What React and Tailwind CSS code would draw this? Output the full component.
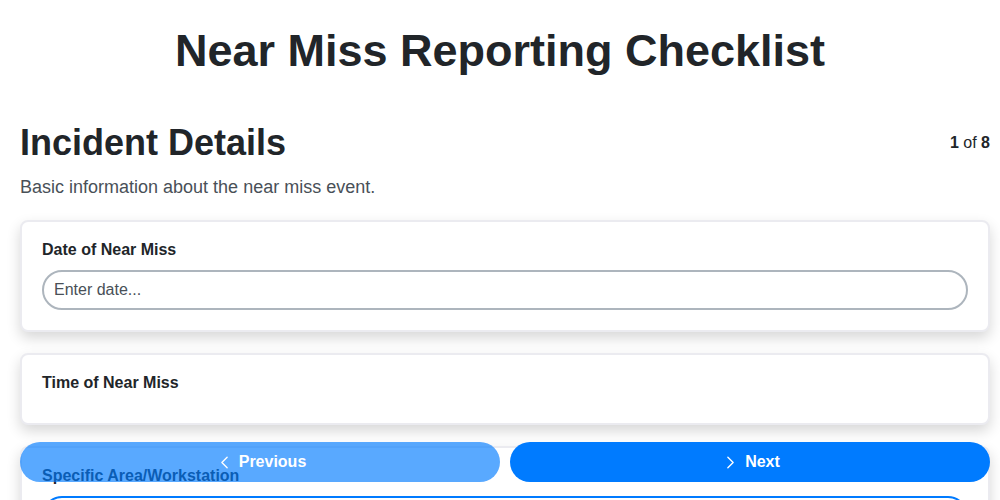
import { ChevronLeft, ChevronRight } from 'lucide-react';

const fields = [
  { id: 'date', label: 'Date of Near Miss', placeholder: 'Enter date...', input: true },
  { id: 'time', label: 'Time of Near Miss', input: false },
  { id: 'area', label: 'Specific Area/Workstation', placeholder: 'Enter area...', input: true, focused: true },
  { id: 'dept', label: 'Department', placeholder: 'Enter department...', input: true },
];

const FieldCard = ({ field }) => {
  const inputClass = field.focused
    ? 'w-full h-10 px-[10px] rounded-full border-2 border-[#007bff] text-base text-[#212529] placeholder-[#495057] outline-none bg-white'
    : 'w-full h-10 px-[10px] rounded-full border-2 border-[#adb5bd] text-base text-[#212529] placeholder-[#495057] outline-none bg-white';

  return (
    <div className="bg-white rounded-lg border-2 border-[#ebebf0] shadow-[0_6px_14px_rgba(0,0,0,0.16)] px-[20px] pt-[19px] pb-[20px]">
      <label htmlFor={field.id} className="block text-base font-bold leading-[18px] text-[#212529] mb-[11px]">
        {field.label}
      </label>
      {field.input && (
        <input id={field.id} type="text" placeholder={field.placeholder} className={inputClass} />
      )}
    </div>
  );
};

export default function App() {
  return (
    <div
      className="relative h-[500px] overflow-hidden bg-white text-[#212529]"
      style={{ fontFamily: '"Liberation Sans", Arial, sans-serif' }}
    >
      <h1 className="text-[45px] font-bold leading-[55px] text-center pt-[23px]">
        Near Miss Reporting Checklist
      </h1>

      <div className="pl-5 pr-[10px]">
        <div className="flex items-center justify-between mt-[43px]">
          <h2 className="text-4xl font-bold leading-[43px]">Incident Details</h2>
          <div className="text-base">
            <span className="font-bold">1</span> of <span className="font-bold">8</span>
          </div>
        </div>
        <p className="text-lg leading-[27px] text-[#495057] mt-[10px]">
          Basic information about the near miss event.
        </p>

        <div className="flex flex-col gap-[21px] mt-[19px]">
          {fields.map((f) => (
            <FieldCard key={f.id} field={f} />
          ))}
        </div>
      </div>

      <div className="fixed left-5 right-[10px] bottom-[18px] flex gap-[10px]">
        <button
          disabled
          className="flex-1 h-10 rounded-full bg-[#007bff] opacity-65 text-white font-bold text-base flex items-center justify-center gap-[4px]"
        >
          <ChevronLeft size={21} strokeWidth={1.6} />
          Previous
        </button>
        <button className="flex-1 h-10 rounded-full bg-[#007bff] text-white font-bold text-base flex items-center justify-center gap-[4px]">
          <ChevronRight size={21} strokeWidth={1.6} />
          Next
        </button>
      </div>
    </div>
  );
}
